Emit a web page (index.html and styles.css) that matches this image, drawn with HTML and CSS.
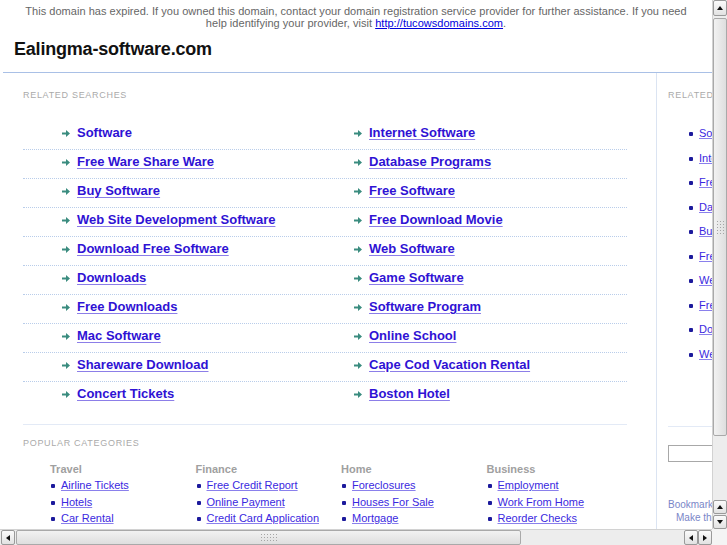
FILE: index.html
```html
<!DOCTYPE html>
<html>
<head>
<meta charset="utf-8">
<title>Ealingma-software.com</title>
<link rel="stylesheet" href="styles.css">
</head>
<body>
<div class="screen">
  <div class="page">
    <div class="sheet">
      <p class="notice">This domain has expired. If you owned this domain, contact your domain registration service provider for further assistance. If you need help identifying your provider, visit <a href="#">http://tucowsdomains.com</a>.</p>
      <h1 class="domain">Ealingma-software.com</h1>
      <div class="main">
        <div class="content">
          <div class="label">RELATED SEARCHES</div>
          <div class="searches">
            <div class="row"><a class="big plain" href="#"><svg class="arrow" viewBox="0 0 8 7"><path d="M0 2.5h4V0l4 3.5L4 7V4.5H0z"/></svg>Software</a><a class="big" href="#"><svg class="arrow" viewBox="0 0 8 7"><path d="M0 2.5h4V0l4 3.5L4 7V4.5H0z"/></svg><u>Internet Software</u></a></div>
            <div class="row"><a class="big" href="#"><svg class="arrow" viewBox="0 0 8 7"><path d="M0 2.5h4V0l4 3.5L4 7V4.5H0z"/></svg><u>Free Ware Share Ware</u></a><a class="big" href="#"><svg class="arrow" viewBox="0 0 8 7"><path d="M0 2.5h4V0l4 3.5L4 7V4.5H0z"/></svg><u>Database Programs</u></a></div>
            <div class="row"><a class="big" href="#"><svg class="arrow" viewBox="0 0 8 7"><path d="M0 2.5h4V0l4 3.5L4 7V4.5H0z"/></svg><u>Buy Software</u></a><a class="big" href="#"><svg class="arrow" viewBox="0 0 8 7"><path d="M0 2.5h4V0l4 3.5L4 7V4.5H0z"/></svg><u>Free Software</u></a></div>
            <div class="row"><a class="big" href="#"><svg class="arrow" viewBox="0 0 8 7"><path d="M0 2.5h4V0l4 3.5L4 7V4.5H0z"/></svg><u>Web Site Development Software</u></a><a class="big" href="#"><svg class="arrow" viewBox="0 0 8 7"><path d="M0 2.5h4V0l4 3.5L4 7V4.5H0z"/></svg><u>Free Download Movie</u></a></div>
            <div class="row"><a class="big" href="#"><svg class="arrow" viewBox="0 0 8 7"><path d="M0 2.5h4V0l4 3.5L4 7V4.5H0z"/></svg><u>Download Free Software</u></a><a class="big" href="#"><svg class="arrow" viewBox="0 0 8 7"><path d="M0 2.5h4V0l4 3.5L4 7V4.5H0z"/></svg><u>Web Software</u></a></div>
            <div class="row"><a class="big" href="#"><svg class="arrow" viewBox="0 0 8 7"><path d="M0 2.5h4V0l4 3.5L4 7V4.5H0z"/></svg><u>Downloads</u></a><a class="big" href="#"><svg class="arrow" viewBox="0 0 8 7"><path d="M0 2.5h4V0l4 3.5L4 7V4.5H0z"/></svg><u>Game Software</u></a></div>
            <div class="row"><a class="big" href="#"><svg class="arrow" viewBox="0 0 8 7"><path d="M0 2.5h4V0l4 3.5L4 7V4.5H0z"/></svg><u>Free Downloads</u></a><a class="big" href="#"><svg class="arrow" viewBox="0 0 8 7"><path d="M0 2.5h4V0l4 3.5L4 7V4.5H0z"/></svg><u>Software Program</u></a></div>
            <div class="row"><a class="big" href="#"><svg class="arrow" viewBox="0 0 8 7"><path d="M0 2.5h4V0l4 3.5L4 7V4.5H0z"/></svg><u>Mac Software</u></a><a class="big" href="#"><svg class="arrow" viewBox="0 0 8 7"><path d="M0 2.5h4V0l4 3.5L4 7V4.5H0z"/></svg><u>Online School</u></a></div>
            <div class="row"><a class="big" href="#"><svg class="arrow" viewBox="0 0 8 7"><path d="M0 2.5h4V0l4 3.5L4 7V4.5H0z"/></svg><u>Shareware Download</u></a><a class="big" href="#"><svg class="arrow" viewBox="0 0 8 7"><path d="M0 2.5h4V0l4 3.5L4 7V4.5H0z"/></svg><u>Cape Cod Vacation Rental</u></a></div>
            <div class="row last"><a class="big" href="#"><svg class="arrow" viewBox="0 0 8 7"><path d="M0 2.5h4V0l4 3.5L4 7V4.5H0z"/></svg><u>Concert Tickets</u></a><a class="big" href="#"><svg class="arrow" viewBox="0 0 8 7"><path d="M0 2.5h4V0l4 3.5L4 7V4.5H0z"/></svg><u>Boston Hotel</u></a></div>
          </div>
          <div class="label popular">POPULAR CATEGORIES</div>
          <div class="cats">
            <div class="cat">
              <div class="cat-title">Travel</div>
              <ul class="dots">
                <li><a href="#">Airline Tickets</a></li>
                <li><a href="#">Hotels</a></li>
                <li><a href="#">Car Rental</a></li>
              </ul>
            </div>
            <div class="cat">
              <div class="cat-title">Finance</div>
              <ul class="dots">
                <li><a href="#">Free Credit Report</a></li>
                <li><a href="#">Online Payment</a></li>
                <li><a href="#">Credit Card Application</a></li>
              </ul>
            </div>
            <div class="cat">
              <div class="cat-title">Home</div>
              <ul class="dots">
                <li><a href="#">Foreclosures</a></li>
                <li><a href="#">Houses For Sale</a></li>
                <li><a href="#">Mortgage</a></li>
              </ul>
            </div>
            <div class="cat">
              <div class="cat-title">Business</div>
              <ul class="dots">
                <li><a href="#">Employment</a></li>
                <li><a href="#">Work From Home</a></li>
                <li><a href="#">Reorder Checks</a></li>
              </ul>
            </div>
          </div>
        </div>
        <div class="side">
          <div class="label">RELATED SEARCHES</div>
          <ul class="dots side-list">
            <li><a href="#">Software</a></li>
            <li><a href="#">Internet Software</a></li>
            <li><a href="#">Free Ware Share Ware</a></li>
            <li><a href="#">Database Programs</a></li>
            <li><a href="#">Buy Software</a></li>
            <li><a href="#">Free Software</a></li>
            <li><a href="#">Web Site Development Software</a></li>
            <li><a href="#">Free Download Movie</a></li>
            <li><a href="#">Download Free Software</a></li>
            <li><a href="#">Web Software</a></li>
          </ul>
          <div class="side-rule"></div>
          <input class="search" type="text">
          <div class="bookmark">
            <a href="#">Bookmark this page</a>
            <a class="home" href="#">Make this your homepage</a>
          </div>
        </div>
      </div>
    </div>
  </div>
  <div class="vscroll">
    <div class="btn up"><span class="tri tri-up"></span></div>
    <div class="vthumb"><span class="grip grip-v"></span></div>
    <div class="vtrough"></div>
    <div class="btn up"><span class="tri tri-up"></span></div>
    <div class="btn down"><span class="tri tri-down"></span></div>
  </div>
  <div class="hscroll">
    <div class="btn hb"><span class="tri tri-left"></span></div>
    <div class="hthumb"><span class="grip grip-h"></span></div>
    <div class="htrough"></div>
    <div class="btn hb"><span class="tri tri-left"></span></div>
    <div class="btn hb"><span class="tri tri-right"></span></div>
  </div>
  <div class="corner"></div>
</div>
</body>
</html>
```
FILE: styles.css
```css
* { box-sizing: border-box; }
html, body { margin: 0; padding: 0; background: #fff; }
body { font-family: "Liberation Sans", Arial, sans-serif; }

.screen {
  display: grid;
  grid-template-columns: 712px 15px;
  grid-template-rows: 529px 16px;
  width: 727px;
  height: 545px;
  overflow: hidden;
}

.page { overflow: hidden; background: #fff; }
.sheet { width: 930px; }

.notice {
  width: 712px;
  margin: 0;
  padding: 5px 24px 0;
  text-align: center;
  font-size: 11px;
  line-height: 12px;
  color: #666;
  letter-spacing: 0.03px;
}
.notice a { color: #0000dd; }

.domain {
  margin: 0 0 0 3px;
  padding: 10px 0 0 11px;
  height: 44px;
  font-size: 18px;
  line-height: 20px;
  font-weight: bold;
  color: #111;
  letter-spacing: -0.2px;
  width: 709px;
  border-bottom: 1px solid #a9c0e6;
}

.main { display: flex; padding-left: 3px; }

.content {
  width: 654px;
  flex: none;
  padding: 17px 29px 0 20px;
  border-right: 1px solid #dbe4f2;
  min-height: 470px;
}

.label {
  font-size: 9px;
  line-height: 10px;
  color: #aaa;
  letter-spacing: 0.7px;
}

.searches {
  margin-top: 21px;
  padding-bottom: 14px;
  border-bottom: 1px solid #e3eaf6;
}
.row {
  display: grid;
  grid-template-columns: 292px 1fr;
  padding: 4px 0 8px 39px;
  border-bottom: 1px dotted #b9cdea;
}
.row.last { border-bottom: none; }

.big {
  font-size: 13px;
  line-height: 16px;
  font-weight: bold;
  color: #2f12d4;
  text-decoration: none;
  display: flex;
  align-items: center;
}
.big u { text-decoration: underline; text-decoration-color: #8c7ee8; text-underline-offset: 2px; }
.arrow { width: 8px; height: 7px; fill: #3a8c7f; margin-right: 7px; flex: none; }

.popular { margin-top: 13px; }

.cats {
  display: grid;
  grid-template-columns: repeat(4, 145.5px);
  padding: 14px 0 0 27px;
}
.cat-title {
  font-size: 11px;
  line-height: 14px;
  font-weight: bold;
  color: #a0a0a0;
}
.dots {
  list-style: none;
  margin: 1px 0 0;
  padding: 0;
}
.dots li {
  position: relative;
  font-size: 11px;
  line-height: 16.5px;
  padding-left: 11px;
  white-space: nowrap;
}
.dots li::before {
  content: "";
  position: absolute;
  left: 1px;
  top: 7px;
  width: 4px;
  height: 4px;
  border-radius: 1px;
  background: #1c1a9c;
}
.dots a { color: #3a28e0; text-decoration-color: #8a80ec; }

.side {
  flex: none;
  width: 240px;
  padding: 17px 0 0 11px;
}
.side-list { margin-top: 21px; }
.side-list li { line-height: 24.5px; padding-left: 31px; }
.side-list li::before { left: 21px; top: 11px; }

.side-rule {
  margin-top: 60px;
  border-top: 1px solid #e3eaf6;
  width: 160px;
}
.search {
  display: block;
  margin-top: 18px;
  width: 150px;
  height: 17px;
  border: 1px solid #a8a8a8;
  padding: 0;
}
.bookmark {
  margin-top: 36px;
  font-size: 10px;
  line-height: 13px;
}
.bookmark a { display: block; color: #7a86c8; text-decoration: none; }
.bookmark .home { padding-left: 8px; }

/* scrollbars */
.vscroll {
  display: flex;
  flex-direction: column;
  background: #ededed;
  border-left: 1px solid #d2d2d2;
}
.hscroll {
  display: flex;
  background: #ededed;
  border-top: 1px solid #d2d2d2;
}
.corner { background: #f4f4f4; }

.btn {
  flex: none;
  display: flex;
  align-items: center;
  justify-content: center;
  background: linear-gradient(#fbfbfb, #e2e2e2);
  border: 1px solid #9a9a9a;
  border-radius: 2px;
}
.vscroll .btn { height: 14px; margin: 1px 0 0 0; }
.vscroll .btn.up:first-child { height: 16px; margin-top: 0; }
.hscroll .btn { width: 14px; }
.hscroll .btn:first-child { margin-left: 1px; }

.tri { width: 0; height: 0; border: 3.5px solid transparent; }
.tri-up { border-bottom: 4px solid #111; border-top: 0; }
.tri-down { border-top: 4px solid #111; border-bottom: 0; }
.tri-left { border-right: 4px solid #111; border-left: 0; }
.tri-right { border-left: 4px solid #111; border-right: 0; }

.vthumb {
  height: 418px;
  flex: none;
  margin-top: 2px;
  background: linear-gradient(90deg, #f2f2f2, #dedede);
  border: 1px solid #a9a9a9;
  border-radius: 2px;
  display: flex;
  align-items: center;
  justify-content: center;
}
.vtrough { flex: 1; }
.hthumb {
  width: 505px;
  flex: none;
  margin-left: 1px;
  background: linear-gradient(#f2f2f2, #dedede);
  border: 1px solid #a9a9a9;
  border-radius: 2px;
  display: flex;
  align-items: center;
  justify-content: center;
}
.htrough { flex: 1; }
.grip {
  background-image: radial-gradient(circle, #a5a5a5 0.8px, transparent 1px);
  background-size: 3px 3px;
}
.grip-v { width: 9px; height: 15px; }
.grip-h { width: 18px; height: 9px; }
```
